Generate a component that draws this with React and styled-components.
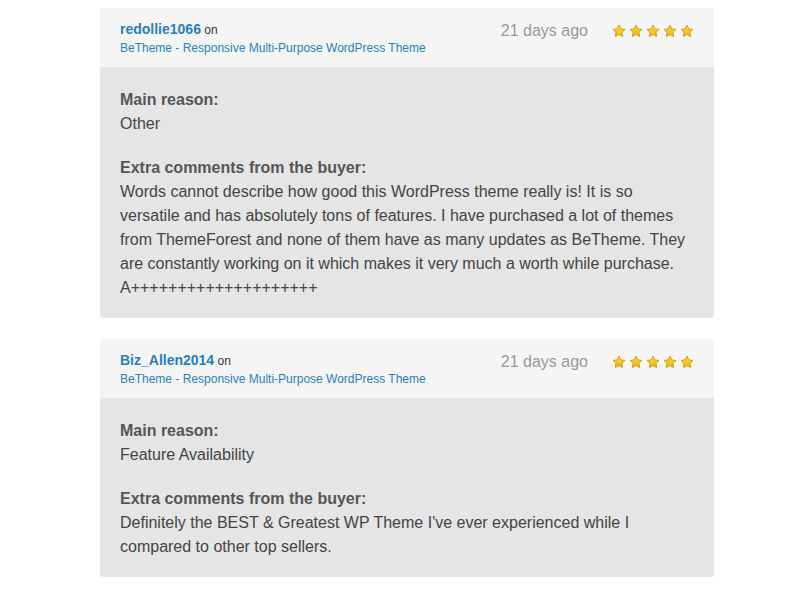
import React from 'react';
import styled, { createGlobalStyle } from 'styled-components';

const GlobalStyle = createGlobalStyle`
  body {
    margin: 0;
    background: #fff;
    font-family: "Helvetica Neue", "Liberation Sans", Arial, sans-serif;
  }
`;

const reviews = [
  {
    user: 'redollie1066',
    reason: 'Other',
    comment:
      'Words cannot describe how good this WordPress theme really is! It is so versatile and has absolutely tons of features. I have purchased a lot of themes from ThemeForest and none of them have as many updates as BeTheme. They are constantly working on it which makes it very much a worth while purchase. A++++++++++++++++++++',
  },
  {
    user: 'Biz_Allen2014',
    reason: 'Feature Availability',
    comment:
      "Definitely the BEST & Greatest WP Theme I've ever experienced while I compared to other top sellers.",
  },
];

const Star = () => (
  <svg width="14" height="14" viewBox="0 0 24 24">
    <defs>
      <linearGradient id="starFill" x1="0" y1="0" x2="0" y2="1">
        <stop offset="0" stopColor="#ffd84a" />
        <stop offset="1" stopColor="#f5b400" />
      </linearGradient>
    </defs>
    <path
      d="M12 1.8l3.1 6.6 7.1.9-5.2 5 1.3 7.1L12 18l-6.3 3.4 1.3-7.1-5.2-5 7.1-.9z"
      fill="url(#starFill)"
      stroke="#d39a0a"
      strokeWidth="1.6"
      strokeLinejoin="round"
    />
  </svg>
);

const Review = ({ user, reason, comment }) => (
  <Card>
    <CardHeader>
      <Author>
        <UserLine>
          <UserName href="#">{user}</UserName> on
        </UserLine>
        <ItemLink href="#">BeTheme - Responsive Multi-Purpose WordPress Theme</ItemLink>
      </Author>
      <Meta>
        <DateText>21 days ago</DateText>
        <Stars>
          {[0, 1, 2, 3, 4].map(i => (
            <Star key={i} />
          ))}
        </Stars>
      </Meta>
    </CardHeader>
    <CardBody>
      <Block>
        <Label>Main reason:</Label>
        <Text>{reason}</Text>
      </Block>
      <Block>
        <Label>Extra comments from the buyer:</Label>
        <Text>{comment}</Text>
      </Block>
    </CardBody>
  </Card>
);

export default function App() {
  return (
    <>
      <GlobalStyle />
      <Page>
        {reviews.map(r => (
          <Review key={r.user} {...r} />
        ))}
      </Page>
    </>
  );
}

const Page = styled.div`
  width: 614px;
  margin: 0 auto;
  padding: 8px 0 0 14px;
  display: flex;
  flex-direction: column;
  gap: 21px;
`;

const Card = styled.div`
  border-radius: 3px;
  overflow: hidden;
`;

const CardHeader = styled.div`
  background: #f5f5f5;
  height: 59px;
  box-sizing: border-box;
  padding: 13px 20px 0 20px;
  display: flex;
  justify-content: space-between;
  align-items: flex-start;
`;

const Author = styled.div`
  display: flex;
  flex-direction: column;
`;

const UserLine = styled.div`
  font-size: 12px;
  line-height: 17px;
  color: #333;
`;

const UserName = styled.a`
  font-size: 14px;
  font-weight: bold;
  color: #2a7fbd;
  text-decoration: none;
`;

const ItemLink = styled.a`
  font-size: 12px;
  line-height: 18px;
  color: #2a7fbd;
  text-decoration: none;
`;

const Meta = styled.div`
  display: flex;
  align-items: center;
  gap: 24px;
  padding-top: 1px;
`;

const DateText = styled.span`
  font-size: 16px;
  color: #999;
  line-height: 18px;
`;

const Stars = styled.div`
  display: flex;
  gap: 3px;
`;

const CardBody = styled.div`
  background: #e5e5e5;
  padding: 21px 20px 18px 20px;
  display: flex;
  flex-direction: column;
  gap: 20px;
`;

const Block = styled.div`
  font-size: 16px;
  line-height: 24px;
  color: #444;
`;

const Label = styled.div`
  font-weight: bold;
  color: #555;
`;

const Text = styled.div`
  color: #444;
`;
